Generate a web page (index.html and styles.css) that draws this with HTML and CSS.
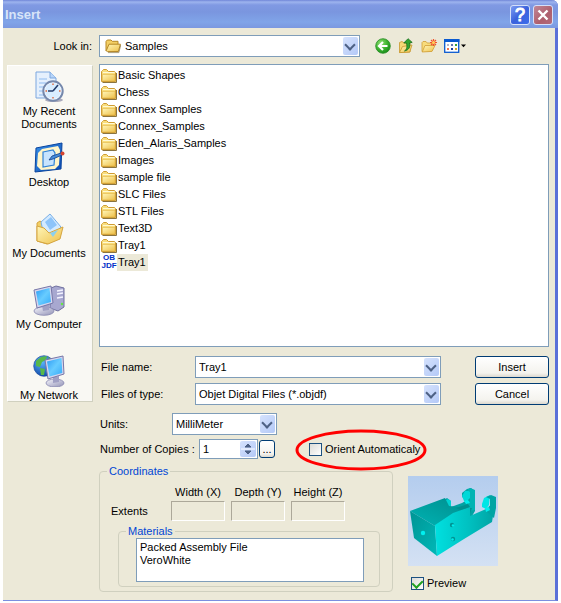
FILE: index.html
```html
<!DOCTYPE html>
<html lang="en">
<head>
<meta charset="UTF-8">
<title>Insert</title>
<link rel="stylesheet" href="styles.css">
</head>
<body>

<!-- shared icons and gradients -->
<svg class="defs" aria-hidden="true">
  <defs>
    <linearGradient id="gold" x1="0" y1="0" x2="1" y2="1"><stop offset="0" stop-color="#fff6b8"/><stop offset="1" stop-color="#eec04a"/></linearGradient>
    <linearGradient id="screen" x1="0" y1="0" x2="1" y2="1"><stop offset="0" stop-color="#2b9cf5"/><stop offset=".5" stop-color="#68ccff"/><stop offset="1" stop-color="#35aaf8"/></linearGradient>
    <linearGradient id="metal" x1="0" y1="0" x2="1" y2="1"><stop offset="0" stop-color="#f5f5fc"/><stop offset="1" stop-color="#9292b6"/></linearGradient>
    <linearGradient id="blue" x1="0" y1="0" x2="1" y2="1"><stop offset="0" stop-color="#3a93ea"/><stop offset="1" stop-color="#0b49b0"/></linearGradient>
    <radialGradient id="green" cx=".35" cy=".3" r=".8"><stop offset="0" stop-color="#8ee070"/><stop offset=".6" stop-color="#35ad2a"/><stop offset="1" stop-color="#15851a"/></radialGradient>
    <radialGradient id="globe" cx=".4" cy=".3" r=".8"><stop offset="0" stop-color="#5db8ff"/><stop offset="1" stop-color="#083c9e"/></radialGradient>
    <linearGradient id="sky" x1="0" y1="0" x2="0" y2="1"><stop offset="0" stop-color="#b4cdee"/><stop offset="1" stop-color="#d4e1f3"/></linearGradient>
    <linearGradient id="side" x1="0" y1="0" x2="1" y2="0"><stop offset="0" stop-color="#00e0e0"/><stop offset=".55" stop-color="#00c2c2"/><stop offset="1" stop-color="#00a4a4"/></linearGradient>
    <linearGradient id="top" x1="0" y1="1" x2="1" y2="0"><stop offset="0" stop-color="#00b4b4"/><stop offset=".5" stop-color="#00a0a0"/><stop offset="1" stop-color="#008c8c"/></linearGradient>
    <linearGradient id="front" x1="0" y1="0" x2="1" y2="1"><stop offset="0" stop-color="#009494"/><stop offset="1" stop-color="#00b8b8"/></linearGradient>
  </defs>
  <symbol id="folder" viewBox="0 0 16 16">
    <path d="M1.5 14.5H15.5V5" fill="none" stroke="#8a7440"/>
    <path d="M.5 13.5V3.5L1.5 2.5L2.5 1.5H5.5L7.5 3.5H13.5L14.5 4.5V13.5Z" fill="#f8dd7c" stroke="#cf9c33"/>
    <path d="M1.5 12.8V6.5H14V13Z" fill="url(#gold)" stroke="#e2b548" stroke-width=".6"/>
    <path d="M2 4.5H13.5" stroke="#fff9d4"/>
  </symbol>
  <symbol id="folder-open" viewBox="0 0 16 16">
    <path d="M1 13V3.5L2.3 2H6L7.3 3.3H13V6.5" fill="#f3cf65" stroke="#b68725"/>
    <path d="M2.5 13.6L1.2 12.8 4 6.2H15.4L13.4 13.5Z" fill="url(#gold)" stroke="#b68725"/>
    <path d="M3 14.6H13.8L15.8 7" fill="none" stroke="#8b7542" stroke-width=".7"/>
  </symbol>
</svg>

<form class="window">
  <header class="titlebar">
    <h1>Insert</h1>
    <button type="button" class="cap" title="Help">?</button>
    <button type="button" class="cap close" title="Close"><svg viewBox="0 0 12 12"><path d="M1.5 1.5L10.5 10.5M10.5 1.5L1.5 10.5"/></svg></button>
  </header>

  <div class="look">
    <label for="lookin">Look in:</label>
    <span class="combo folders"><svg><use href="#folder-open"/></svg><select id="lookin"><option>Samples</option></select></span>
    <nav class="tools">
      <button type="button" title="Back"><svg viewBox="0 0 16 16"><circle cx="8" cy="8" r="7.3" fill="url(#green)" stroke="#268b23" stroke-width=".8"/><path d="M12.5 8H4.5M8 4L4 8L8 12" fill="none" stroke="#fff" stroke-width="2.2"/></svg></button>
      <button type="button" title="Up one level"><svg viewBox="0 0 16 16"><path d="M1.5 14.5V4.5L4 3.5L6 5H12V14Z" fill="#f5d977" stroke="#c8972f" stroke-width=".8"/><path d="M1.5 14.6L4.5 8.5L14 7L11.8 14Z" fill="url(#gold)" stroke="#c8972f" stroke-width=".8"/><path d="M6.5 13C9.5 11 9 8 8.5 5H5.8L10 .7L14.2 4.4L11.5 5C12.5 9 11 12 6.5 13Z" fill="#31a52f" stroke="#176e1b" stroke-width=".8"/></svg></button>
      <button type="button" title="New folder"><svg viewBox="0 0 16 16"><path d="M1 13.5V4.5L2 3.5H5L6.2 5H11V13Z" fill="#f8dc7c" stroke="#cf9e37" stroke-width=".8"/><path d="M1.2 14L4 7.5H14L11 13.4Z" fill="url(#gold)" stroke="#cf9e37" stroke-width=".8"/><path d="M12.5 1V8M9 4.5H16M10 2L15 7M15 2L10 7" stroke="#f2542c" stroke-width="1.2"/><circle cx="12.5" cy="4.5" r="1.5" fill="#ffd25c"/></svg></button>
      <button type="button" class="views" title="Views"><svg viewBox="0 0 22 16"><rect x=".7" y="1.7" width="14" height="12.6" fill="#fff" stroke="#0a5ad0" stroke-width="1.3"/><path d="M0 2.5H15.4" stroke="#0a5ad0" stroke-width="3"/><path d="M3 7H5" stroke="#b3b3cb" stroke-width="2"/><path d="M3 11H5" stroke="#ef7350" stroke-width="2"/><path d="M7 7H9" stroke="#6876ae" stroke-width="2"/><path d="M7 11H9" stroke="#1b3e9d" stroke-width="2"/><path d="M11 7H13" stroke="#35a33c" stroke-width="2"/><path d="M11 11H13" stroke="#d6a522" stroke-width="2"/><path d="M17 6.5H22L19.5 9.2Z" fill="#000"/></svg></button>
    </nav>
  </div>

  <div class="columns">
    <nav class="places">
      <button type="button">
        <svg viewBox="0 0 32 32"><path d="M3 1H17L23 7V27H3Z" fill="#e5f0fd" stroke="#7da7df"/><path d="M17 1V7H23" fill="#b8d5f8" stroke="#7da7df"/><path d="M6 8H14M6 12H13M6 16H11M6 20H10M6 24H11" stroke="#8ebbf0"/><ellipse cx="21" cy="29" rx="9" ry="2" fill="#aaaabc"/><circle cx="20" cy="20" r="9.7" fill="#f7fbff" stroke="#7588ac" stroke-width="2"/><circle cx="20" cy="20" r="8" fill="#d9edff"/><path d="M20 20L25 14M20 20H15" stroke="#233d6c" stroke-width="1.6"/><path d="M20 12.5V14M20 26V27.5M12.5 20H14M26 20H27.5" stroke="#e2683a" stroke-width="1.4"/></svg>
        My Recent Documents
      </button>
      <button type="button">
        <svg viewBox="0 0 32 32"><path d="M3 6L29 1L28 27L2 30Z" fill="url(#blue)" stroke="#0a449d"/><path d="M9 7L25 4L27 8L26 23L22 27L8 28L4 24L5 11Z" fill="#fff5c9"/><path d="M10 10L20 8L22 11L21 23L10 25Z" fill="#c7e4fe" stroke="#2f82d6" stroke-width="1.2"/><path d="M16 18L19 14L28 11L29 13L20 17Z" fill="#438cda" stroke="#143f86" stroke-width=".8"/><circle cx="29.5" cy="11.5" r="2" fill="#d44430"/></svg>
        Desktop
      </button>
      <button type="button">
        <svg viewBox="0 0 32 32"><path d="M4 28V10L7 8L11 11L25 12V26L14 31Z" fill="#f3cf65" stroke="#d5a540"/><path d="M8 9L17 1L28 14L20 24L10 18Z" fill="#d3eaff" stroke="#77aee6"/><path d="M12 9L18 4L24 12L17 17Z" fill="#8dc4f9"/><path d="M4 28V13L11 15L16 20L30 14L27 26L15 31Z" fill="url(#gold)" stroke="#d5a540"/><path d="M17 20L25 17L20 24Z" fill="#8bd0f0"/></svg>
        My Documents
      </button>
      <button type="button">
        <svg viewBox="0 0 32 32"><path d="M18 4L23 2L31 4V23L25 27L17 24Z" fill="#a8a8d0" stroke="#70709e"/><path d="M24 7L30 6M24 10L30 9M24 14L30 13" stroke="#f3f3ff" stroke-width="1.4"/><circle cx="29" cy="20" r="1.2" fill="#66e643"/><ellipse cx="11" cy="27" rx="10" ry="4.3" fill="url(#metal)" stroke="#8585ae" stroke-width=".8"/><path d="M9 21L17 20L16 26L10 27Z" fill="#a0a0c4"/><path d="M1 6L18 2L20 19L4 24Z" fill="#d6d6ee" stroke="#7777a8"/><path d="M3 7.5L16.5 4L18 18L5.5 21.5Z" fill="url(#screen)"/></svg>
        My Computer
      </button>
      <button type="button">
        <svg viewBox="0 0 32 32"><circle cx="11" cy="11" r="10.3" fill="url(#globe)" stroke="#1b4e9e" stroke-width=".7"/><path d="M3 6L8 2L14 1L13 5L9 7L7 12L3 11ZM7 13L12 14L11 20H8ZM15 2L20 6L16 8Z" fill="#58b84a"/><ellipse cx="22" cy="28" rx="9" ry="4" fill="url(#metal)" stroke="#8585ae" stroke-width=".8"/><path d="M20 22L26 21L26 27L20 28Z" fill="#a0a0c4"/><path d="M12 5L30 1L31 19L15 24Z" fill="#d6d6ee" stroke="#7777a8"/><path d="M14 6.5L28.5 3L29.3 18L16.5 21.5Z" fill="url(#screen)"/></svg>
        My Network
      </button>
    </nav>

    <main>
      <ul class="files">
        <li><svg><use href="#folder"/></svg><span>Basic Shapes</span></li>
        <li><svg><use href="#folder"/></svg><span>Chess</span></li>
        <li><svg><use href="#folder"/></svg><span>Connex Samples</span></li>
        <li><svg><use href="#folder"/></svg><span>Connex_Samples</span></li>
        <li><svg><use href="#folder"/></svg><span>Eden_Alaris_Samples</span></li>
        <li><svg><use href="#folder"/></svg><span>Images</span></li>
        <li><svg><use href="#folder"/></svg><span>sample file</span></li>
        <li><svg><use href="#folder"/></svg><span>SLC Files</span></li>
        <li><svg><use href="#folder"/></svg><span>STL Files</span></li>
        <li><svg><use href="#folder"/></svg><span>Text3D</span></li>
        <li><svg><use href="#folder"/></svg><span>Tray1</span></li>
        <li class="selected"><b class="objdf">OB<br>JDF</b><span>Tray1</span></li>
      </ul>

      <div class="fields">
        <label for="filename">File name:</label>
        <span class="combo"><select id="filename"><option>Tray1</option></select></span>
        <button type="button" class="push">Insert</button>
        <label for="filetype">Files of type:</label>
        <span class="combo"><select id="filetype"><option>Objet Digital Files (*.objdf)</option></select></span>
        <button type="button" class="push">Cancel</button>
      </div>

      <div class="units">
        <label for="units">Units:</label>
        <span class="combo"><select id="units"><option>MilliMeter</option></select></span>
      </div>

      <div class="copies">
        <label for="copies">Number of Copies :</label>
        <span class="spin"><input id="copies" type="text" value="1"><svg viewBox="0 0 14 16"><path d="M0 8H14" stroke="#fff"/><path d="M4 6L7 3L10 6ZM4 10L7 13L10 10Z" fill="#4d6185" stroke="#4d6185"/></svg></span>
        <button type="button" class="push more">...</button>
        <span class="orient">
          <input type="checkbox" id="orient"><label for="orient">Orient Automaticaly</label>
          <svg class="ring" viewBox="0 0 132 42"><ellipse cx="66" cy="21" rx="64" ry="19"/></svg>
        </span>
      </div>

      <div class="bottom">
        <fieldset class="coords">
          <legend>Coordinates</legend>
          <div class="extents">
            <span class="row">Extents</span>
            <div><label for="w">Width (X)</label><input id="w" type="text" disabled></div>
            <div><label for="d">Depth (Y)</label><input id="d" type="text" disabled></div>
            <div><label for="h">Height (Z)</label><input id="h" type="text" disabled></div>
          </div>
          <fieldset class="materials">
            <legend>Materials</legend>
            <ul>
              <li>Packed Assembly File</li>
              <li>VeroWhite</li>
            </ul>
          </fieldset>
        </fieldset>

        <div class="preview">
          <svg class="model" viewBox="0 0 90 90">
            <rect width="90" height="90" fill="url(#sky)"/>
            <!-- far arm -->
            <path d="M36 24L39 22L43 25V31L54 27L59 24L54 21V17L59 13L63 12L67 15V35L64 40L45 42Z" fill="#00a3a3"/>
            <path d="M36 25L40 23L43 25V31L38 30Z" fill="#00d2d2"/>
            <path d="M54 20L57 15H62V22L59 25H56Z" fill="#00d8d8"/>
            <path d="M59 14L62 12L67 14V34L60 35V27L62 24V16Z" fill="#00b3b3"/>
            <!-- block -->
            <path d="M2 35L37 22L41 30L50 31L64 32L62 38L27 50Z" fill="url(#top)"/>
            <path d="M2 35L27 50L29 80L6 62Z" fill="url(#front)"/>
            <path d="M27 49L45 37L62 31V40L78 33L86 26L85 40L84 46L56 63L29 80Z" fill="url(#side)"/>
            <path d="M48 32L60 28L62 31L52 34Z" fill="#008f8f"/>
            <!-- near hook -->
            <path d="M74 28L76 22L82 19L81 29L78 33L74 31Z" fill="#00e6e6"/>
            <path d="M78 21L83 19L88 21V32L86 42L79 36L82 31V23Z" fill="#00a4a4"/>
            <path d="M77 32L81 31L82 34L78 36Z" fill="#00eeee"/>
            <path d="M56 25L60 24L62 27L58 28Z" fill="#00eeee"/>
            <circle cx="15" cy="57" r="2.2" fill="#00f0f0"/>
            <circle cx="44" cy="49" r="2.2" fill="#009494"/><circle cx="45" cy="49.5" r="1.3" fill="#00eeee"/>
            <circle cx="45" cy="63" r="2.2" fill="#009494"/><circle cx="44.5" cy="63.5" r="1.3" fill="#00eeee"/>
          </svg>
          <span class="check"><input type="checkbox" id="preview" checked><label for="preview">Preview</label></span>
        </div>
      </div>
    </main>
  </div>
</form>
</body>
</html>
```
FILE: styles.css
```css
:root {
  --face: #ece9d8;
  --field-border: #7f9db9;
  --line: #d0d0bf;
  --legend: #0046d5;
  --arrow: #4d6185;
}
* {
  box-sizing: border-box;
}
body {
  margin: 0;
  background: #fff;
}
body, button, input, select {
  font-family: "Liberation Sans", Arial, sans-serif;
  font-size: 11px;
  line-height: 13px;
  color: #000;
}
label {
  white-space: nowrap;
}
ul {
  list-style: none;
  margin: 0;
  padding: 0;
}
svg {
  display: block;
  width: 16px;
  height: 16px;
}
.defs {
  position: absolute;
  width: 0;
  height: 0;
}

.window {
  margin: 0 3px 2px;
  background: var(--face);
  border-right: 3px solid #5b70d8;
  border-bottom: 1px solid #7b8fe0;
  border-radius: 0 6px 0 0;
  padding-bottom: 8px;
}

/* title bar */
.titlebar {
  display: flex;
  align-items: center;
  gap: 3px;
  height: 28px;
  margin-right: -3px;
  padding: 2px 5px 0 2px;
  border-radius: 0 6px 0 0;
  background: linear-gradient(#7086d8, #9db4ee 2px, #8099e3 5px, #7a96df 12px, #80a4e8 22px, #7b98e0);
}
.titlebar h1 {
  flex: 1;
  margin: 0;
  font-size: 13px;
  line-height: 16px;
  color: #d8e4f8;
}
.cap {
  display: grid;
  place-items: center;
  width: 20px;
  height: 20px;
  padding: 0;
  border: 1px solid #d5e0fa;
  border-radius: 3px;
  background: linear-gradient(135deg, #7d9cf2, #3a62dc 50%, #3d6ceb);
  color: #fff;
  font-size: 18px;
  line-height: 18px;
  -webkit-text-stroke: 1px #fff;
}
.close {
  background: linear-gradient(135deg, #c18797, #ae5f6d 60%, #b26a7a);
}
.close svg {
  width: 12px;
  height: 12px;
  stroke: #fff;
  stroke-width: 2.4;
}

/* combo boxes */
.combo {
  position: relative;
  display: flex;
}
.combo select {
  appearance: none;
  width: 100%;
  height: 22px;
  padding: 0 20px 0 3px;
  border: 1px solid var(--field-border);
  border-radius: 0;
  background: #fff;
}
.combo::before {
  content: "";
  position: absolute;
  top: 2px;
  right: 2px;
  width: 15px;
  height: 18px;
  border-radius: 2px;
  background: linear-gradient(135deg, #d5e2fd, #b4c9f7);
  pointer-events: none;
}
.combo::after {
  content: "";
  position: absolute;
  top: 6px;
  right: 6px;
  width: 6px;
  height: 6px;
  border: solid var(--arrow);
  border-width: 0 2px 2px 0;
  transform: rotate(45deg);
  pointer-events: none;
}

.look {
  display: flex;
  align-items: center;
  padding: 7px 6px 7px 4px;
}
.look > label {
  width: 85px;
  text-align: right;
}
.folders {
  flex: 0 1 261px;
  margin-left: 7px;
}
.folders select {
  padding-left: 25px;
}
.folders svg {
  position: absolute;
  top: 3px;
  left: 6px;
}
.tools {
  display: flex;
  gap: 7px;
  margin-left: 15px;
}
.tools button {
  padding: 0;
  border: 0;
  background: none;
}
.tools .views svg {
  width: 22px;
}

.columns {
  display: grid;
  grid-template-columns: 86px minmax(0, 1fr);
  align-items: start;
  gap: 6px;
  padding: 0 6px 0 4px;
}

/* places bar */
.places {
  display: grid;
  grid-template-columns: minmax(0, 1fr);
  grid-auto-rows: 71px;
  height: 337px;
  margin-top: 1px;
  padding-top: 5px;
  overflow: hidden;
  background: #f9f8f3;
  border: 1px solid #fff;
  border-right-color: var(--line);
  border-bottom-color: var(--line);
}
.places button {
  display: flex;
  flex-direction: column;
  align-items: center;
  gap: 2px;
  padding: 0 2px 0 0;
  border: 0;
  background: none;
}
.places svg {
  flex: none;
  width: 32px;
  height: 32px;
}

/* file list */
.files {
  height: 283px;
  padding: 2px 1px;
  background: #fff;
  border: 1px solid var(--field-border);
}
.files li {
  display: flex;
  align-items: center;
  height: 17px;
}
.files span {
  padding: 2px 2px 2px 1px;
}
.files .selected span {
  background: var(--face);
}
.objdf {
  width: 16px;
  height: 17px;
  color: #0030c8;
  font-size: 8px;
  line-height: 8px;
  text-align: center;
}

.fields {
  display: grid;
  grid-template-columns: 94px minmax(0, 246px) 73px;
  align-items: center;
  row-gap: 5px;
  margin-top: 9px;
  padding-left: 2px;
}
.push {
  height: 22px;
  padding: 0;
  border: 1px solid #003c74;
  border-radius: 3px;
  background: linear-gradient(#fff, #f4f3ee 80%, #dcd8ce);
}
.fields .push {
  width: 74px;
  margin-left: 34px;
}

.units, .copies {
  display: flex;
  align-items: center;
  padding-left: 1px;
}
.units {
  margin-top: 8px;
}
.units label {
  width: 72px;
}
.units .combo {
  width: 105px;
}
.copies {
  margin-top: 4px;
}
.copies > label {
  width: 99px;
}
.spin {
  display: flex;
  align-items: center;
  width: 59px;
  height: 20px;
  padding-right: 1px;
  background: #fff;
  border: 1px solid var(--field-border);
}
.spin input {
  width: 100%;
  min-width: 0;
  padding: 0 3px;
  border: 0;
}
.spin svg {
  flex: none;
  border-radius: 2px;
  background: linear-gradient(135deg, #d5e2fd, #b4c9f7);
}
.more {
  width: 16px;
  height: 18px;
  margin-left: 1px;
}

/* tick boxes */
input[type=checkbox] {
  appearance: none;
  display: grid;
  place-items: center;
  width: 13px;
  height: 13px;
  margin: 0;
  border: 1px solid #1c5180;
  background: linear-gradient(135deg, #dcdcd7, #fff);
}
input[type=checkbox]:checked::after {
  content: "";
  width: 5px;
  height: 8px;
  margin-bottom: 3px;
  border: solid #21a121;
  border-width: 0 2px 2px 0;
  transform: rotate(45deg);
}
.check, .orient {
  display: flex;
  align-items: center;
  gap: 3px;
}
.orient {
  position: relative;
  margin-left: 34px;
}
.ring {
  position: absolute;
  top: -14px;
  left: -14px;
  width: 132px;
  height: 42px;
  fill: none;
  stroke: #f00;
  stroke-width: 3;
  pointer-events: none;
}

.bottom {
  display: flex;
  align-items: flex-start;
  gap: 15px;
  margin-top: 6px;
}
fieldset {
  min-width: 0;
  margin: 0;
  border: 1px solid var(--line);
  border-radius: 4px;
}
legend {
  padding: 0 2px;
  color: var(--legend);
}
.coords {
  flex: 0 1 294px;
  padding: 5px 12px 4px 11px;
}
.coords > legend {
  margin-left: -4px;
}
.extents {
  display: grid;
  grid-template-columns: repeat(4, 54px);
  column-gap: 6px;
  align-items: end;
}
.extents .row {
  line-height: 20px;
}
.extents label {
  display: block;
  line-height: 18px;
  text-align: center;
}
.extents input {
  display: block;
  width: 54px;
  height: 20px;
  border: 1px solid;
  border-color: #aca899 #fff #fff #aca899;
  background: var(--face);
}
.materials {
  margin: 4px 0 0 7px;
  padding: 0 15px 4px 17px;
}
.materials legend {
  margin-left: -10px;
}
.materials ul {
  height: 44px;
  padding: 2px 3px;
  background: #fff;
  border: 1px solid var(--field-border);
}
.preview {
  padding-top: 11px;
}
.model {
  width: 90px;
  height: 90px;
}
.check {
  margin: 11px 0 0 3px;
}
```
